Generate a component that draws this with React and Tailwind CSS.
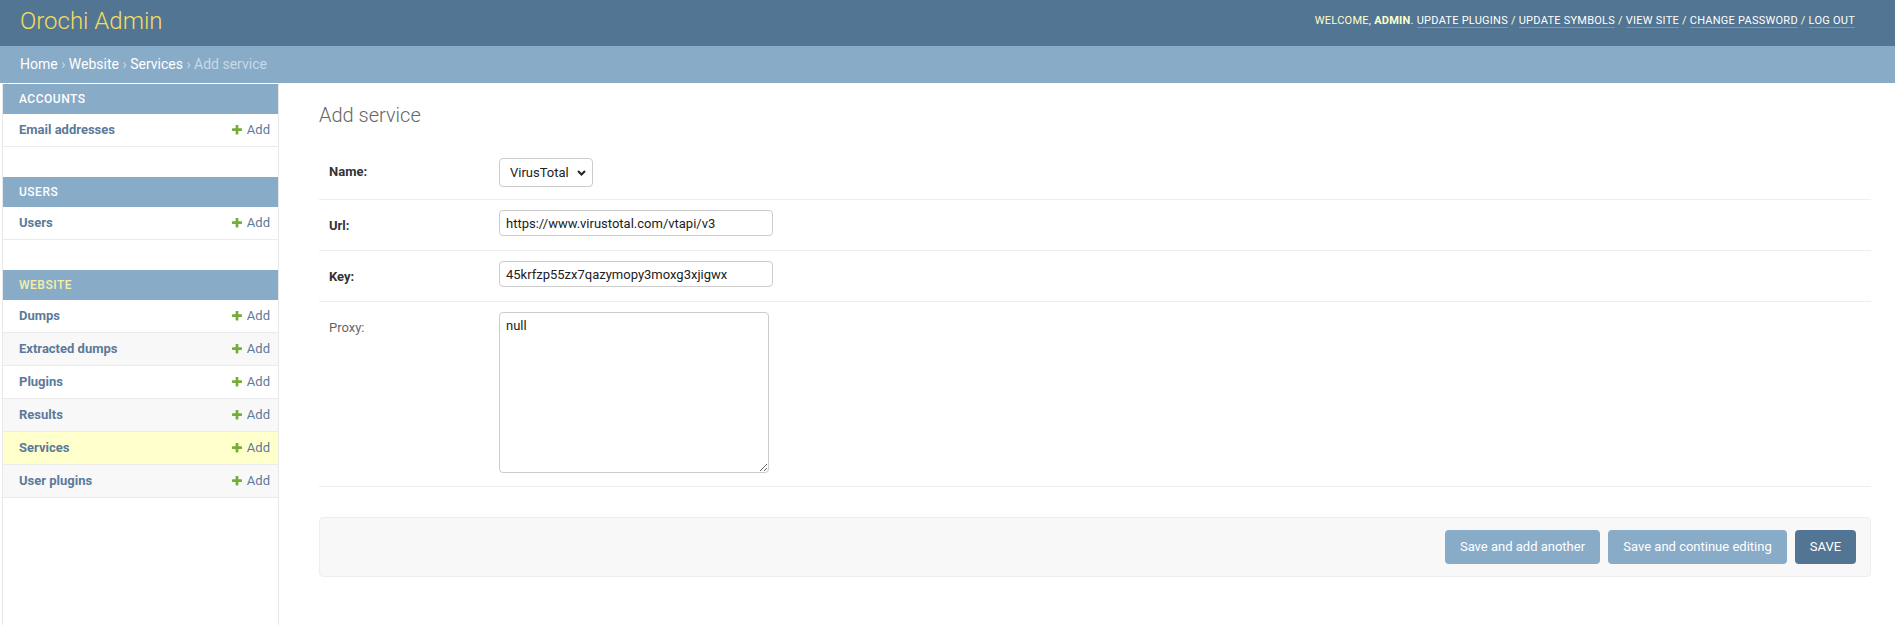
import React from "react";

const modules = [
  {
    title: "Accounts",
    titleClass: "text-white",
    rows: [{ name: "Email addresses", bg: "bg-white" }],
  },
  {
    title: "Users",
    titleClass: "text-white",
    rows: [{ name: "Users", bg: "bg-white" }],
  },
  {
    title: "Website",
    titleClass: "text-[#f4efaa]",
    rows: [
      { name: "Dumps", bg: "bg-white" },
      { name: "Extracted dumps", bg: "bg-[#f8f8f8]" },
      { name: "Plugins", bg: "bg-white" },
      { name: "Results", bg: "bg-[#f8f8f8]" },
      { name: "Services", bg: "bg-[#ffffcc]" },
      { name: "User plugins", bg: "bg-[#f8f8f8]" },
    ],
  },
];

function Plus() {
  return (
    <svg viewBox="192 192 1408 1408" className="w-[10px] h-[10px]" fill="#74ad35">
      <path d="M1600 736v192q0 40-28 68t-68 28h-416v416q0 40-28 68t-68 28h-192q-40 0-68-28t-28-68v-416h-416q-40 0-68-28t-28-68v-192q0-40 28-68t68-28h416v-416q0-40 28-68t68-28h192q40 0 68 28t28 68v416h416q40 0 68 28t28 68z" />
    </svg>
  );
}

function Sidebar() {
  return (
    <nav className="w-[276px] shrink-0 border-r border-[#e8e8e8] pt-[1px]">
      {modules.map((m) => (
        <div key={m.title} className="mb-[30px]">
          <div
            className={`h-[30px] bg-[#88abc8] flex items-center pl-4 text-[12px] font-medium uppercase tracking-[0.5px] ${m.titleClass}`}
          >
            {m.title}
          </div>
          {m.rows.map((r) => (
            <div
              key={r.name}
              className={`h-[33px] border-b border-[#ebebeb] flex items-center justify-between pl-4 pr-2 text-[13px] ${r.bg}`}
            >
              <span className="font-bold text-[#5b7a9b]">{r.name}</span>
              <span className="flex items-center gap-[5px] text-[#5b7a9b]">
                <Plus />
                Add
              </span>
            </div>
          ))}
        </div>
      ))}
    </nav>
  );
}

function UserTools() {
  const links = ["Update plugins", "Update symbols", "View site", "Change password", "Log out"];
  return (
    <div className="text-[11px] tracking-[0.25px] uppercase text-[#ffffcc]">
      Welcome, <strong className="font-bold">admin</strong>.{" "}
      {links.map((l, i) => (
        <React.Fragment key={l}>
          <a className="text-white border-b border-white/25">{l}</a>
          {i < links.length - 1 ? " / " : ""}
        </React.Fragment>
      ))}
    </div>
  );
}

export default function App() {
  return (
    <div className="min-h-screen flex flex-col bg-white font-['Roboto','Liberation_Sans',sans-serif] text-[#333]">
      <header className="h-[46px] shrink-0 bg-[#527593] flex items-center justify-between pl-5 pr-10 pb-1">
        <div className="text-[24px] font-light text-[#f5dd5d]">Orochi Admin</div>
        <UserTools />
      </header>
      <div className="h-[37px] shrink-0 bg-[#88abc8] flex items-center pl-5 text-[14px] text-[#c7d9e6]">
        <a className="text-white">Home</a>
        <span>&nbsp;›&nbsp;</span>
        <a className="text-white">Website</a>
        <span>&nbsp;›&nbsp;</span>
        <a className="text-white">Services</a>
        <span>&nbsp;›&nbsp;Add service</span>
      </div>
      <div className="flex flex-1">
        <div className="w-[3px] shrink-0 border-r border-[#e8e8e8]" />
        <Sidebar />
        <main className="flex-1 min-w-0 pl-10 pr-6 pt-5">
          <h1 className="text-[20px] font-light leading-[24px] text-[#666]">Add service</h1>
          <div className="mt-[21px]">
            <div className="flex h-[52px] border-b border-[#eee] pl-[10px] pt-[10px]">
              <label className="w-[170px] pr-[10px] mt-[4px] leading-[20px] text-[13px] font-bold text-[#333]">
                Name:
              </label>
              <div className="h-[29px] w-[94px] border border-[#ccc] rounded-[4px] flex items-center justify-between pl-[10px] pr-[6px] text-[13px] text-[#222]">
                <span>VirusTotal</span>
                <svg width="9" height="6" viewBox="0 0 9 6" fill="none">
                  <path d="M1 1l3.5 3.5L8 1" stroke="#222" strokeWidth="2" />
                </svg>
              </div>
            </div>
            <div className="flex h-[51px] border-b border-[#eee] pl-[10px] pt-[10px]">
              <label className="w-[170px] pr-[10px] mt-[6px] leading-[20px] text-[13px] font-bold text-[#333]">
                Url:
              </label>
              <input
                readOnly
                defaultValue="https://www.virustotal.com/vtapi/v3"
                className="h-[26px] w-[274px] border border-[#ccc] rounded-[4px] px-[6px] text-[13px] text-[#222] outline-none"
              />
            </div>
            <div className="flex h-[51px] border-b border-[#eee] pl-[10px] pt-[10px]">
              <label className="w-[170px] pr-[10px] mt-[6px] leading-[20px] text-[13px] font-bold text-[#333]">
                Key:
              </label>
              <input
                readOnly
                defaultValue="45krfzp55zx7qazymopy3moxg3xjigwx"
                className="h-[26px] w-[274px] border border-[#ccc] rounded-[4px] px-[6px] text-[13px] text-[#222] outline-none"
              />
            </div>
            <div className="flex h-[185px] border-b border-[#eee] pl-[10px] pt-[10px]">
              <label className="w-[170px] pr-[10px] mt-[6px] leading-[20px] text-[13px] text-[#666]">
                Proxy:
              </label>
              <textarea
                readOnly
                defaultValue="null"
                className="h-[161px] w-[270px] border border-[#ccc] rounded-[4px] px-[6px] py-[5px] text-[13px] leading-[16px] text-[#222] outline-none"
              />
            </div>
          </div>
          <div className="mt-[30px] h-[60px] bg-[#f8f8f8] border border-[#eee] rounded-[4px] flex items-center justify-end gap-2 pr-[14px]">
            <button className="h-[34px] w-[155px] rounded-[4px] bg-[#88abc8] text-white text-[13px]">
              Save and add another
            </button>
            <button className="h-[34px] w-[179px] rounded-[4px] bg-[#88abc8] text-white text-[13px]">
              Save and continue editing
            </button>
            <button className="h-[34px] w-[61px] rounded-[4px] bg-[#527593] text-white text-[13px] uppercase">
              Save
            </button>
          </div>
        </main>
      </div>
    </div>
  );
}
